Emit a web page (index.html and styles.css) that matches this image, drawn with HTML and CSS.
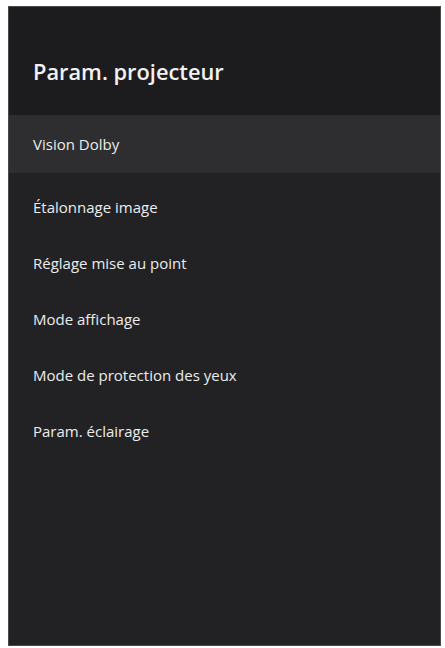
FILE: index.html
```html
<!DOCTYPE html>
<html lang="fr">
<head>
<meta charset="utf-8">
<link rel="stylesheet" href="styles.css">
</head>
<body>
<div class="panel">
  <header class="header">
    <h1 class="title">Param. projecteur</h1>
  </header>
  <ul class="menu">
    <li class="item active">Vision Dolby</li>
    <li class="item">Étalonnage image</li>
    <li class="item">Réglage mise au point</li>
    <li class="item">Mode affichage</li>
    <li class="item">Mode de protection des yeux</li>
    <li class="item">Param. éclairage</li>
  </ul>
</div>
</body>
</html>
```
FILE: styles.css
```css
html, body {
  margin: 0;
  padding: 0;
  background: #ffffff;
}
body {
  padding: 6px 4px 2px 8px;
  height: 648px;
  box-sizing: border-box;
  font-family: "Open Sans", "Liberation Sans", sans-serif;
}
.panel {
  height: 640px;
  background: #222224;
  border: 1px solid #4a4a4c;
  box-sizing: border-box;
  display: flex;
  flex-direction: column;
}
.header {
  background: #1c1c1e;
  height: 108px;
  display: flex;
  align-items: center;
  padding-left: 24px;
  padding-top: 20px;
  box-sizing: border-box;
}
.title {
  margin: 0;
  color: #f2f2f2;
  font-size: 21.8px;
  font-weight: 600;
}
.menu {
  list-style: none;
  margin: 0;
  padding: 0;
}
.item {
  height: 56px;
  display: flex;
  align-items: center;
  padding-left: 24px;
  color: #ececec;
  font-size: 15px;
  font-weight: 500;
}
.item.active {
  height: 58px;
  background: #2e2e30;
}
.item:nth-child(2) { margin-top: 6px; }
```
